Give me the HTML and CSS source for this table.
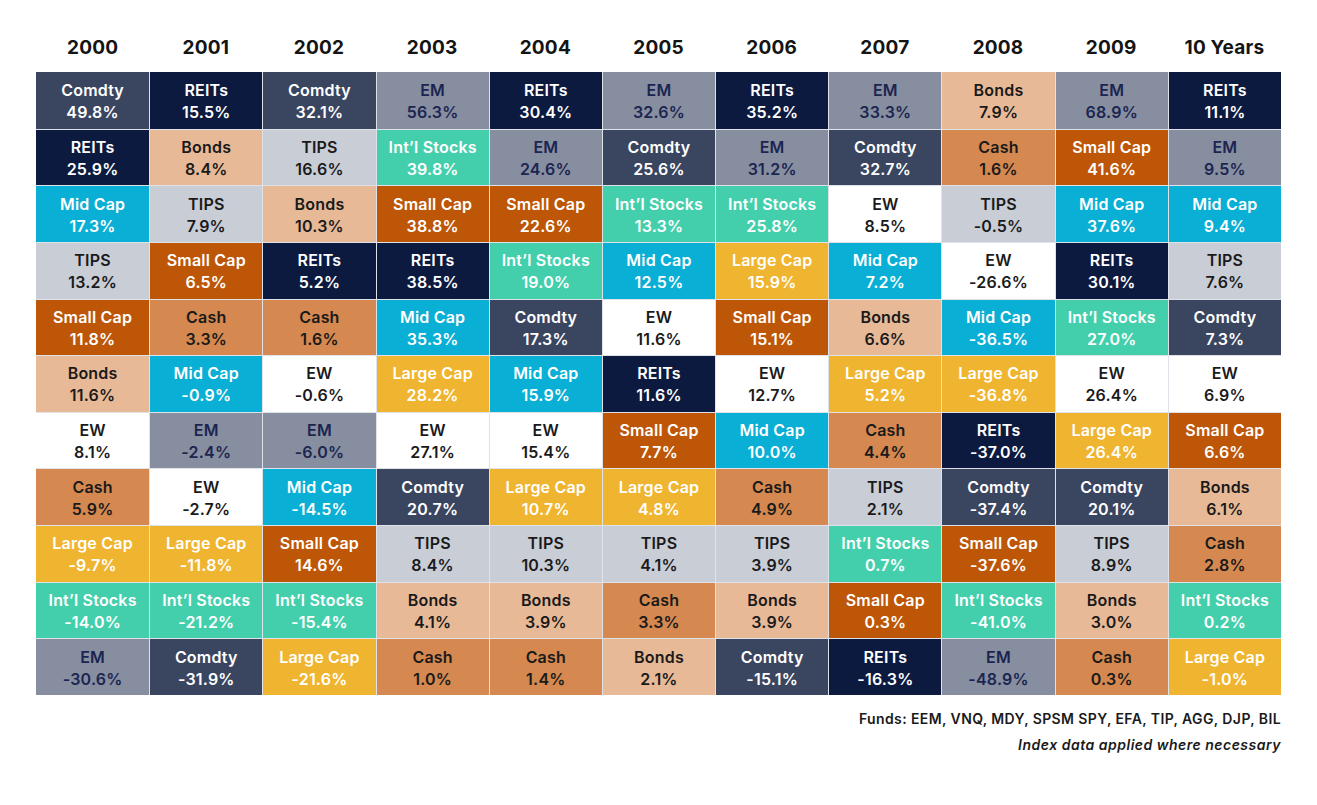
FILE: index.html
```html
<!DOCTYPE html>
<html lang="en">
<head>
<meta charset="utf-8">
<title>Asset Class Returns 2000-2009</title>
<link rel="stylesheet" href="styles.css">
</head>
<body>
<div class="page">
  <div class="heads">
    <div>2000</div><div>2001</div><div>2002</div><div>2003</div><div>2004</div><div>2005</div><div>2006</div><div>2007</div><div>2008</div><div>2009</div><div>10 Years</div>
  </div>
  <div class="grid">
    <div class="col">
      <div class="c comdty"><span>Comdty</span><span>49.8%</span></div>
      <div class="c reits"><span>REITs</span><span>25.9%</span></div>
      <div class="c mid"><span>Mid Cap</span><span>17.3%</span></div>
      <div class="c tips"><span>TIPS</span><span>13.2%</span></div>
      <div class="c small"><span>Small Cap</span><span>11.8%</span></div>
      <div class="c bonds"><span>Bonds</span><span>11.6%</span></div>
      <div class="c ew"><span>EW</span><span>8.1%</span></div>
      <div class="c cash"><span>Cash</span><span>5.9%</span></div>
      <div class="c large"><span>Large Cap</span><span>-9.7%</span></div>
      <div class="c intl"><span>Int’l Stocks</span><span>-14.0%</span></div>
      <div class="c em"><span>EM</span><span>-30.6%</span></div>
    </div>
    <div class="col">
      <div class="c reits"><span>REITs</span><span>15.5%</span></div>
      <div class="c bonds"><span>Bonds</span><span>8.4%</span></div>
      <div class="c tips"><span>TIPS</span><span>7.9%</span></div>
      <div class="c small"><span>Small Cap</span><span>6.5%</span></div>
      <div class="c cash"><span>Cash</span><span>3.3%</span></div>
      <div class="c mid"><span>Mid Cap</span><span>-0.9%</span></div>
      <div class="c em"><span>EM</span><span>-2.4%</span></div>
      <div class="c ew"><span>EW</span><span>-2.7%</span></div>
      <div class="c large"><span>Large Cap</span><span>-11.8%</span></div>
      <div class="c intl"><span>Int’l Stocks</span><span>-21.2%</span></div>
      <div class="c comdty"><span>Comdty</span><span>-31.9%</span></div>
    </div>
    <div class="col">
      <div class="c comdty"><span>Comdty</span><span>32.1%</span></div>
      <div class="c tips"><span>TIPS</span><span>16.6%</span></div>
      <div class="c bonds"><span>Bonds</span><span>10.3%</span></div>
      <div class="c reits"><span>REITs</span><span>5.2%</span></div>
      <div class="c cash"><span>Cash</span><span>1.6%</span></div>
      <div class="c ew"><span>EW</span><span>-0.6%</span></div>
      <div class="c em"><span>EM</span><span>-6.0%</span></div>
      <div class="c mid"><span>Mid Cap</span><span>-14.5%</span></div>
      <div class="c small"><span>Small Cap</span><span>14.6%</span></div>
      <div class="c intl"><span>Int’l Stocks</span><span>-15.4%</span></div>
      <div class="c large"><span>Large Cap</span><span>-21.6%</span></div>
    </div>
    <div class="col">
      <div class="c em"><span>EM</span><span>56.3%</span></div>
      <div class="c intl"><span>Int’l Stocks</span><span>39.8%</span></div>
      <div class="c small"><span>Small Cap</span><span>38.8%</span></div>
      <div class="c reits"><span>REITs</span><span>38.5%</span></div>
      <div class="c mid"><span>Mid Cap</span><span>35.3%</span></div>
      <div class="c large"><span>Large Cap</span><span>28.2%</span></div>
      <div class="c ew"><span>EW</span><span>27.1%</span></div>
      <div class="c comdty"><span>Comdty</span><span>20.7%</span></div>
      <div class="c tips"><span>TIPS</span><span>8.4%</span></div>
      <div class="c bonds"><span>Bonds</span><span>4.1%</span></div>
      <div class="c cash"><span>Cash</span><span>1.0%</span></div>
    </div>
    <div class="col">
      <div class="c reits"><span>REITs</span><span>30.4%</span></div>
      <div class="c em"><span>EM</span><span>24.6%</span></div>
      <div class="c small"><span>Small Cap</span><span>22.6%</span></div>
      <div class="c intl"><span>Int’l Stocks</span><span>19.0%</span></div>
      <div class="c comdty"><span>Comdty</span><span>17.3%</span></div>
      <div class="c mid"><span>Mid Cap</span><span>15.9%</span></div>
      <div class="c ew"><span>EW</span><span>15.4%</span></div>
      <div class="c large"><span>Large Cap</span><span>10.7%</span></div>
      <div class="c tips"><span>TIPS</span><span>10.3%</span></div>
      <div class="c bonds"><span>Bonds</span><span>3.9%</span></div>
      <div class="c cash"><span>Cash</span><span>1.4%</span></div>
    </div>
    <div class="col">
      <div class="c em"><span>EM</span><span>32.6%</span></div>
      <div class="c comdty"><span>Comdty</span><span>25.6%</span></div>
      <div class="c intl"><span>Int’l Stocks</span><span>13.3%</span></div>
      <div class="c mid"><span>Mid Cap</span><span>12.5%</span></div>
      <div class="c ew"><span>EW</span><span>11.6%</span></div>
      <div class="c reits"><span>REITs</span><span>11.6%</span></div>
      <div class="c small"><span>Small Cap</span><span>7.7%</span></div>
      <div class="c large"><span>Large Cap</span><span>4.8%</span></div>
      <div class="c tips"><span>TIPS</span><span>4.1%</span></div>
      <div class="c cash"><span>Cash</span><span>3.3%</span></div>
      <div class="c bonds"><span>Bonds</span><span>2.1%</span></div>
    </div>
    <div class="col">
      <div class="c reits"><span>REITs</span><span>35.2%</span></div>
      <div class="c em"><span>EM</span><span>31.2%</span></div>
      <div class="c intl"><span>Int’l Stocks</span><span>25.8%</span></div>
      <div class="c large"><span>Large Cap</span><span>15.9%</span></div>
      <div class="c small"><span>Small Cap</span><span>15.1%</span></div>
      <div class="c ew"><span>EW</span><span>12.7%</span></div>
      <div class="c mid"><span>Mid Cap</span><span>10.0%</span></div>
      <div class="c cash"><span>Cash</span><span>4.9%</span></div>
      <div class="c tips"><span>TIPS</span><span>3.9%</span></div>
      <div class="c bonds"><span>Bonds</span><span>3.9%</span></div>
      <div class="c comdty"><span>Comdty</span><span>-15.1%</span></div>
    </div>
    <div class="col">
      <div class="c em"><span>EM</span><span>33.3%</span></div>
      <div class="c comdty"><span>Comdty</span><span>32.7%</span></div>
      <div class="c ew"><span>EW</span><span>8.5%</span></div>
      <div class="c mid"><span>Mid Cap</span><span>7.2%</span></div>
      <div class="c bonds"><span>Bonds</span><span>6.6%</span></div>
      <div class="c large"><span>Large Cap</span><span>5.2%</span></div>
      <div class="c cash"><span>Cash</span><span>4.4%</span></div>
      <div class="c tips"><span>TIPS</span><span>2.1%</span></div>
      <div class="c intl"><span>Int’l Stocks</span><span>0.7%</span></div>
      <div class="c small"><span>Small Cap</span><span>0.3%</span></div>
      <div class="c reits"><span>REITs</span><span>-16.3%</span></div>
    </div>
    <div class="col">
      <div class="c bonds"><span>Bonds</span><span>7.9%</span></div>
      <div class="c cash"><span>Cash</span><span>1.6%</span></div>
      <div class="c tips"><span>TIPS</span><span>-0.5%</span></div>
      <div class="c ew"><span>EW</span><span>-26.6%</span></div>
      <div class="c mid"><span>Mid Cap</span><span>-36.5%</span></div>
      <div class="c large"><span>Large Cap</span><span>-36.8%</span></div>
      <div class="c reits"><span>REITs</span><span>-37.0%</span></div>
      <div class="c comdty"><span>Comdty</span><span>-37.4%</span></div>
      <div class="c small"><span>Small Cap</span><span>-37.6%</span></div>
      <div class="c intl"><span>Int’l Stocks</span><span>-41.0%</span></div>
      <div class="c em"><span>EM</span><span>-48.9%</span></div>
    </div>
    <div class="col">
      <div class="c em"><span>EM</span><span>68.9%</span></div>
      <div class="c small"><span>Small Cap</span><span>41.6%</span></div>
      <div class="c mid"><span>Mid Cap</span><span>37.6%</span></div>
      <div class="c reits"><span>REITs</span><span>30.1%</span></div>
      <div class="c intl"><span>Int’l Stocks</span><span>27.0%</span></div>
      <div class="c ew"><span>EW</span><span>26.4%</span></div>
      <div class="c large"><span>Large Cap</span><span>26.4%</span></div>
      <div class="c comdty"><span>Comdty</span><span>20.1%</span></div>
      <div class="c tips"><span>TIPS</span><span>8.9%</span></div>
      <div class="c bonds"><span>Bonds</span><span>3.0%</span></div>
      <div class="c cash"><span>Cash</span><span>0.3%</span></div>
    </div>
    <div class="col">
      <div class="c reits"><span>REITs</span><span>11.1%</span></div>
      <div class="c em"><span>EM</span><span>9.5%</span></div>
      <div class="c mid"><span>Mid Cap</span><span>9.4%</span></div>
      <div class="c tips"><span>TIPS</span><span>7.6%</span></div>
      <div class="c comdty"><span>Comdty</span><span>7.3%</span></div>
      <div class="c ew"><span>EW</span><span>6.9%</span></div>
      <div class="c small"><span>Small Cap</span><span>6.6%</span></div>
      <div class="c bonds"><span>Bonds</span><span>6.1%</span></div>
      <div class="c cash"><span>Cash</span><span>2.8%</span></div>
      <div class="c intl"><span>Int’l Stocks</span><span>0.2%</span></div>
      <div class="c large"><span>Large Cap</span><span>-1.0%</span></div>
    </div>
  </div>
  <div class="notes">
    <p class="funds">Funds: EEM, VNQ, MDY, SPSM SPY, EFA, TIP, AGG, DJP, BIL</p>
    <p class="index">Index data applied where necessary</p>
  </div>
</div>
</body>
</html>
```

FILE: styles.css
```css
html, body {
  margin: 0;
  padding: 0;
  background: #ffffff;
}

body {
  font-family: "Inter", "Lato", "Liberation Sans", sans-serif;
  color: #161616;
}

.page {
  width: 1245px;
  padding: 0 0 0 36px;
  display: flex;
  flex-direction: column;
}

.heads {
  display: grid;
  grid-template-columns: repeat(11, 1fr);
  height: 72px;
  align-items: center;
  padding-top: 22px;
  box-sizing: border-box;
}

.heads div {
  text-align: center;
  font-size: 19px;
  font-weight: 700;
  color: #141414;
  letter-spacing: 0.2px;
}

.grid {
  display: grid;
  grid-template-columns: repeat(11, 1fr);
  height: 623px;
  background: #dfe2e8;
}

.col {
  display: grid;
  grid-template-rows: repeat(11, 1fr);
  border-left: 1px solid #dfe2e8;
}

.col:first-child {
  border-left: none;
}

.c {
  display: flex;
  flex-direction: column;
  align-items: center;
  justify-content: center;
  padding-top: 1px;
  font-size: 16px;
  font-weight: 600;
  line-height: 22px;
  color: #ffffff;
  border-top: 1px solid #dfe2e8;
  letter-spacing: 0.2px;
}

.col .c:first-child {
  border-top: none;
}

.comdty { background: #3a4560; }
.reits  { background: #0c1a3f; }
.em     { background: #878ea0; color: #1b2550; }
.bonds  { background: #e8b997; color: #1a1a1a; }
.tips   { background: #c9cdd6; color: #1a1a1a; }
.intl   { background: #44cfac; }
.mid    { background: #09afd4; }
.small  { background: #bd5607; }
.cash   { background: #d5884f; color: #1a1a1a; }
.ew     { background: #ffffff; color: #1a1a1a; }
.large  { background: #f0b530; }

.notes {
  display: flex;
  flex-direction: column;
  align-items: flex-end;
  padding-top: 15px;
  gap: 9px;
}

.notes p {
  margin: 0;
  font-size: 14px;
  line-height: 17px;
  font-weight: 600;
  color: #1a1a1a;
}

.notes .funds {
  letter-spacing: 0.4px;
}

.notes .index {
  font-style: italic;
  letter-spacing: 0.5px;
}
```
